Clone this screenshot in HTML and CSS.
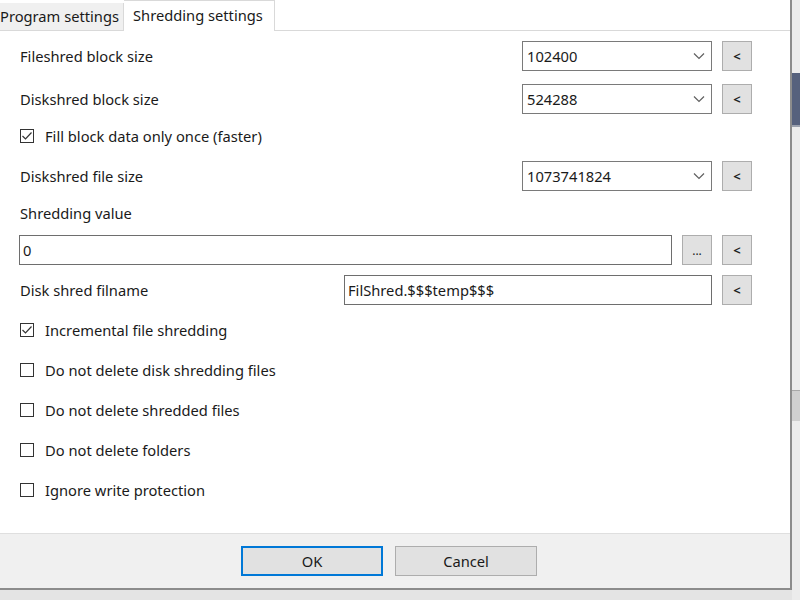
FILE: index.html
```html
<!DOCTYPE html>
<html lang="en">
<head>
    <meta charset="UTF-8">
    <title>Shredding settings</title>
    <link rel="stylesheet" href="styles.css">
</head>
<body>
    <div class="desktop">
        <div class="dialog">
            <div class="tabs">
                <div class="tab">Program settings</div>
                <div class="tab active">Shredding settings</div>
                <div class="tab-fill"></div>
            </div>
            <div class="panel">
                <div class="row">
                    <span class="label">Fileshred block size</span>
                    <div class="combo"><span>102400</span><svg class="chevron" width="12" height="8" viewBox="0 0 12 8"><path d="M1 1.5 L6 6.5 L11 1.5" fill="none" stroke="#606060" stroke-width="1.2"/></svg></div>
                    <button class="small-btn">&lt;</button>
                </div>
                <div class="row tall">
                    <span class="label">Diskshred block size</span>
                    <div class="combo"><span>524288</span><svg class="chevron" width="12" height="8" viewBox="0 0 12 8"><path d="M1 1.5 L6 6.5 L11 1.5" fill="none" stroke="#606060" stroke-width="1.2"/></svg></div>
                    <button class="small-btn">&lt;</button>
                </div>
                <div class="row tight">
                    <label class="check"><span class="box checked"><svg width="12" height="12" viewBox="0 0 12 12"><path d="M1.5 6 L4.5 9 L10.5 2.5" fill="none" stroke="#333" stroke-width="1.2"/></svg></span>Fill block data only once (faster)</label>
                </div>
                <div class="row">
                    <span class="label">Diskshred file size</span>
                    <div class="combo"><span>1073741824</span><svg class="chevron" width="12" height="8" viewBox="0 0 12 8"><path d="M1 1.5 L6 6.5 L11 1.5" fill="none" stroke="#606060" stroke-width="1.2"/></svg></div>
                    <button class="small-btn">&lt;</button>
                </div>
                <div class="row short">
                    <span class="label">Shredding value</span>
                </div>
                <div class="row">
                    <div class="textbox wide">0</div>
                    <button class="small-btn dots">...</button>
                    <button class="small-btn">&lt;</button>
                </div>
                <div class="row">
                    <span class="label">Disk shred filname</span>
                    <div class="textbox name">FilShred.$$$temp$$$</div>
                    <button class="small-btn">&lt;</button>
                </div>
                <div class="row">
                    <label class="check"><span class="box checked"><svg width="12" height="12" viewBox="0 0 12 12"><path d="M1.5 6 L4.5 9 L10.5 2.5" fill="none" stroke="#333" stroke-width="1.2"/></svg></span>Incremental file shredding</label>
                </div>
                <div class="row">
                    <label class="check"><span class="box"></span>Do not delete disk shredding files</label>
                </div>
                <div class="row">
                    <label class="check"><span class="box"></span>Do not delete shredded files</label>
                </div>
                <div class="row">
                    <label class="check"><span class="box"></span>Do not delete folders</label>
                </div>
                <div class="row">
                    <label class="check"><span class="box"></span>Ignore write protection</label>
                </div>
            </div>
            <div class="footer">
                <button class="dlg-btn default">OK</button>
                <button class="dlg-btn">Cancel</button>
            </div>
        </div>
        <div class="behind">
            <div class="behind-band"></div>
            <div class="behind-block"></div>
        </div>
    </div>
</body>
</html>
```

FILE: styles.css
```css
body {
    margin: 0;
    padding: 0;
    background: #e4e4e4;
    font-family: "Noto Sans", "Open Sans", sans-serif;
    font-size: 14.7px;
    color: #1a1a1a;
}

.desktop {
    display: flex;
    width: 800px;
    height: 600px;
    overflow: hidden;
}

.dialog {
    width: 790px;
    height: 588px;
    flex-shrink: 0;
    display: flex;
    flex-direction: column;
    background: #ffffff;
    border-right: 2px solid #8c8c8c;
    border-bottom: 2px solid #8c8c8c;
}

.behind {
    flex: 1;
    background: #ececec;
    height: 600px;
}

.behind-band {
    margin-top: 73px;
    height: 52px;
    background: #56617d;
    border-bottom: 2px solid #9aa0ad;
}

.behind-block {
    margin-top: 263px;
    height: 30px;
    background: #cfcfcf;
    border-top: 1px solid #a8a8a8;
}

.tabs {
    display: flex;
    height: 30px;
    align-items: flex-end;
    border-bottom: 1px solid #d9d9d9;
}

.tab {
    height: 27px;
    line-height: 26px;
    padding: 0 6px 0 0;
    background: #f0f0f0;
    border-right: 1px solid #d9d9d9;
    box-sizing: border-box;
    width: 124px;
    white-space: nowrap;
    overflow: hidden;
}

.tab.active {
    height: 31px;
    margin-bottom: -1px;
    line-height: 28px;
    width: 151px;
    padding: 0 0 0 9px;
    background: #ffffff;
    border: 1px solid #d9d9d9;
    border-bottom: none;
    border-left: none;
}

.tab-fill {
    flex: 1;
}

.panel {
    flex: 1;
    padding: 5px 38px 0 20px;
    display: flex;
    flex-direction: column;
}

.row {
    height: 40px;
    display: flex;
    align-items: center;
    box-sizing: border-box;
}

.row.tall {
    height: 43px;
    padding-top: 3px;
}

.row.tight {
    height: 37px;
    padding-bottom: 3px;
}

.row.short {
    height: 34px;
}

.label {
    flex: 1;
}

.combo {
    width: 190px;
    height: 30px;
    box-sizing: border-box;
    border: 1px solid #7a7a7a;
    display: flex;
    align-items: center;
    justify-content: space-between;
    padding: 0 6px 0 4px;
}

.textbox {
    height: 30px;
    box-sizing: border-box;
    border: 1px solid #6e6e6e;
    display: flex;
    align-items: center;
    padding: 0 3px;
}

.textbox.wide {
    flex: 1;
    margin-left: -1px;
}

.textbox.name {
    width: 368px;
}

.small-btn {
    width: 30px;
    height: 30px;
    margin-left: 10px;
    flex-shrink: 0;
    background: #e1e1e1;
    border: 1px solid #adadad;
    font-family: "Noto Sans", sans-serif;
    font-size: 13px;
    font-weight: bold;
    color: #222;
    padding: 0;
}

.small-btn.dots {
    font-weight: normal;
    font-size: 12px;
}

.check {
    display: flex;
    align-items: center;
    gap: 11px;
}

.box {
    width: 14px;
    height: 14px;
    box-sizing: border-box;
    border: 1px solid #333333;
    background: #ffffff;
    display: flex;
    align-items: center;
    justify-content: center;
}

.footer {
    height: 54px;
    background: #f0f0f0;
    border-top: 1px solid #dfdfdf;
    display: flex;
    align-items: center;
    justify-content: center;
    gap: 12px;
    padding-right: 12px;
}

.dlg-btn {
    width: 142px;
    height: 30px;
    background: #e1e1e1;
    border: 1px solid #adadad;
    font-family: "Noto Sans", sans-serif;
    font-size: 14.7px;
    color: #1a1a1a;
}

.dlg-btn.default {
    border: 2px solid #0078d7;
}
```
